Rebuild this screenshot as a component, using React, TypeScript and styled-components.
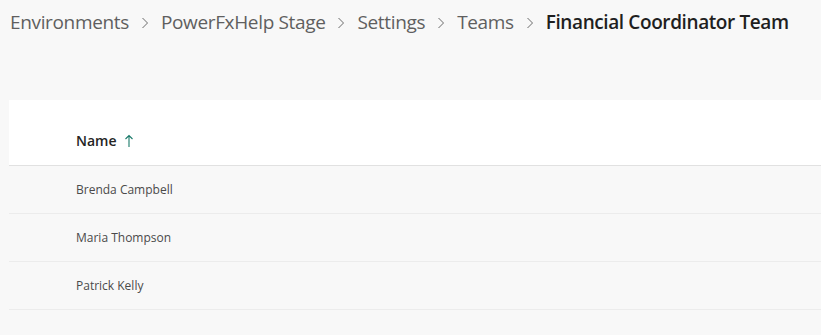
import React from 'react';
import styled, { createGlobalStyle } from 'styled-components';

const GlobalStyle = createGlobalStyle`
  html, body {
    margin: 0;
    padding: 0;
    background: #f8f8f8;
    font-family: "Open Sans", "Noto Sans", sans-serif;
  }
`;

const Page = styled.div`
  width: 821px;
  height: 335px;
  overflow: hidden;
  background: #f8f8f8;
`;

const Breadcrumb = styled.nav`
  display: flex;
  align-items: center;
  height: 44px;
  padding-left: 10px;
`;

const Crumb = styled.span<{ current?: boolean }>`
  font-size: 19px;
  letter-spacing: ${({ current }) => (current ? '-0.4px' : '-0.35px')};
  color: ${({ current }) => (current ? '#1f1f1f' : '#5f5f5f')};
  font-weight: ${({ current }) => (current ? 600 : 400)};
  white-space: nowrap;
`;

const Chevron = styled.svg`
  width: 8px;
  height: 12px;
  margin: 2px 12px 0 12px;
  flex: none;
`;

const Grid = styled.div`
  margin: 56px 0 0 9px;
`;

const HeaderRow = styled.div`
  display: flex;
  align-items: center;
  height: 66px;
  padding-top: 16px;
  box-sizing: border-box;
  padding-left: 67px;
  background: #ffffff;
  border-bottom: 1px solid #e1e1e1;
`;

const HeaderLabel = styled.span`
  font-size: 14px;
  font-weight: 600;
  color: #252423;
`;

const SortArrow = styled.svg`
  width: 10px;
  height: 14px;
  margin-left: 7px;
`;

const Row = styled.div`
  display: flex;
  align-items: center;
  height: 48px;
  padding-left: 67px;
  border-bottom: 1px solid #ececec;
  box-sizing: border-box;
  font-size: 12px;
  color: #4a4a4a;
`;

const crumbs = ['Environments', 'PowerFxHelp Stage', 'Settings', 'Teams'];
const members = ['Brenda Campbell', 'Maria Thompson', 'Patrick Kelly'];

const App = () => {
  return (
    <Page>
      <GlobalStyle />
      <Breadcrumb>
        {crumbs.map((c) => (
          <React.Fragment key={c}>
            <Crumb>{c}</Crumb>
            <Chevron viewBox="0 0 8 12">
              <path d="M1.5 1 L6.5 6 L1.5 11" fill="none" stroke="#6b6b6b" strokeWidth="1" />
            </Chevron>
          </React.Fragment>
        ))}
        <Crumb current>Financial Coordinator Team</Crumb>
      </Breadcrumb>
      <Grid>
        <HeaderRow>
          <HeaderLabel>Name</HeaderLabel>
          <SortArrow viewBox="0 0 10 14">
            <path d="M5 13 V1.5 M1.5 5 L5 1.5 L8.5 5" fill="none" stroke="#1a7a6a" strokeWidth="1.1" />
          </SortArrow>
        </HeaderRow>
        {members.map((m) => (
          <Row key={m}>{m}</Row>
        ))}
      </Grid>
    </Page>
  );
};

export default App;
